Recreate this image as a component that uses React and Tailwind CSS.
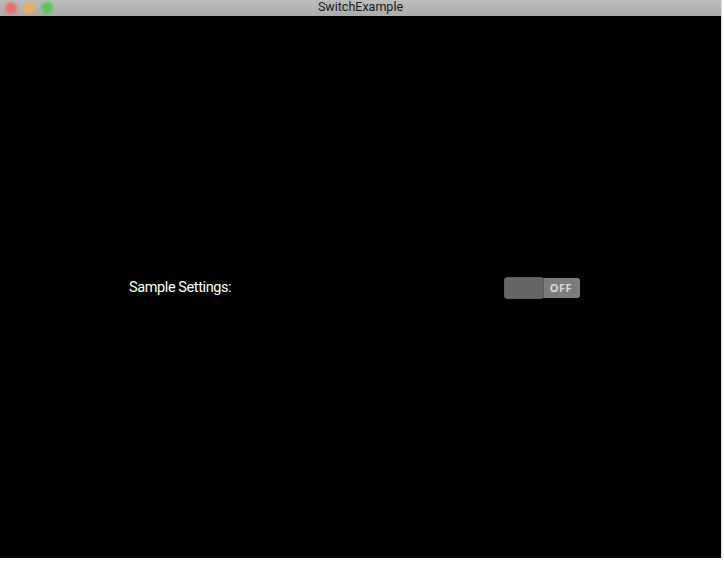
export default function App() {
  return (
    <div className="w-[724px] h-[562px] bg-white relative overflow-hidden" style={{ fontFamily: "Roboto, 'Liberation Sans', sans-serif" }}>
      <div className="w-[722px] h-[558px] flex flex-col bg-black border-r border-[#cfe0ea]">
        <div className="h-[16px] bg-gradient-to-b from-[#bdbdbd] to-[#ababab] relative flex items-center justify-center shrink-0">
          <div className="absolute left-[5px] top-[2px] flex gap-[6px]">
            <div className="w-[12px] h-[12px] rounded-full bg-[#e8706a] blur-[1.5px]" />
            <div className="w-[12px] h-[12px] rounded-full bg-[#e8b066] blur-[1.5px]" />
            <div className="w-[12px] h-[12px] rounded-full bg-[#5cc65c] blur-[1.5px]" />
          </div>
          <span className="text-[12.5px] leading-none text-[#1a1a1a] mt-[-1px]">SwitchExample</span>
        </div>
        <div className="flex-1 flex items-center pl-[129px] pr-[141px] pt-[2px]">
          <span className="text-white text-[14.5px] tracking-[-0.4px] flex-1">Sample Settings:</span>
          <div className="relative w-[76px] h-[22px] flex items-center">
            <div className="absolute left-0 right-0 top-[1px] bottom-[1px] bg-[#7c7c7c] rounded-[3px] flex items-center justify-end pr-[8px]">
              <span className="text-[11px] font-bold tracking-[0.5px] text-[#d8d8d8]" style={{ fontFamily: "'Open Sans', 'Liberation Sans', sans-serif" }}>OFF</span>
            </div>
            <div className="absolute left-0 top-0 w-[40px] h-[22px] bg-[#666666] rounded-[3px] border border-[#5a5a5a]" />
          </div>
        </div>
      </div>
    </div>
  );
}
